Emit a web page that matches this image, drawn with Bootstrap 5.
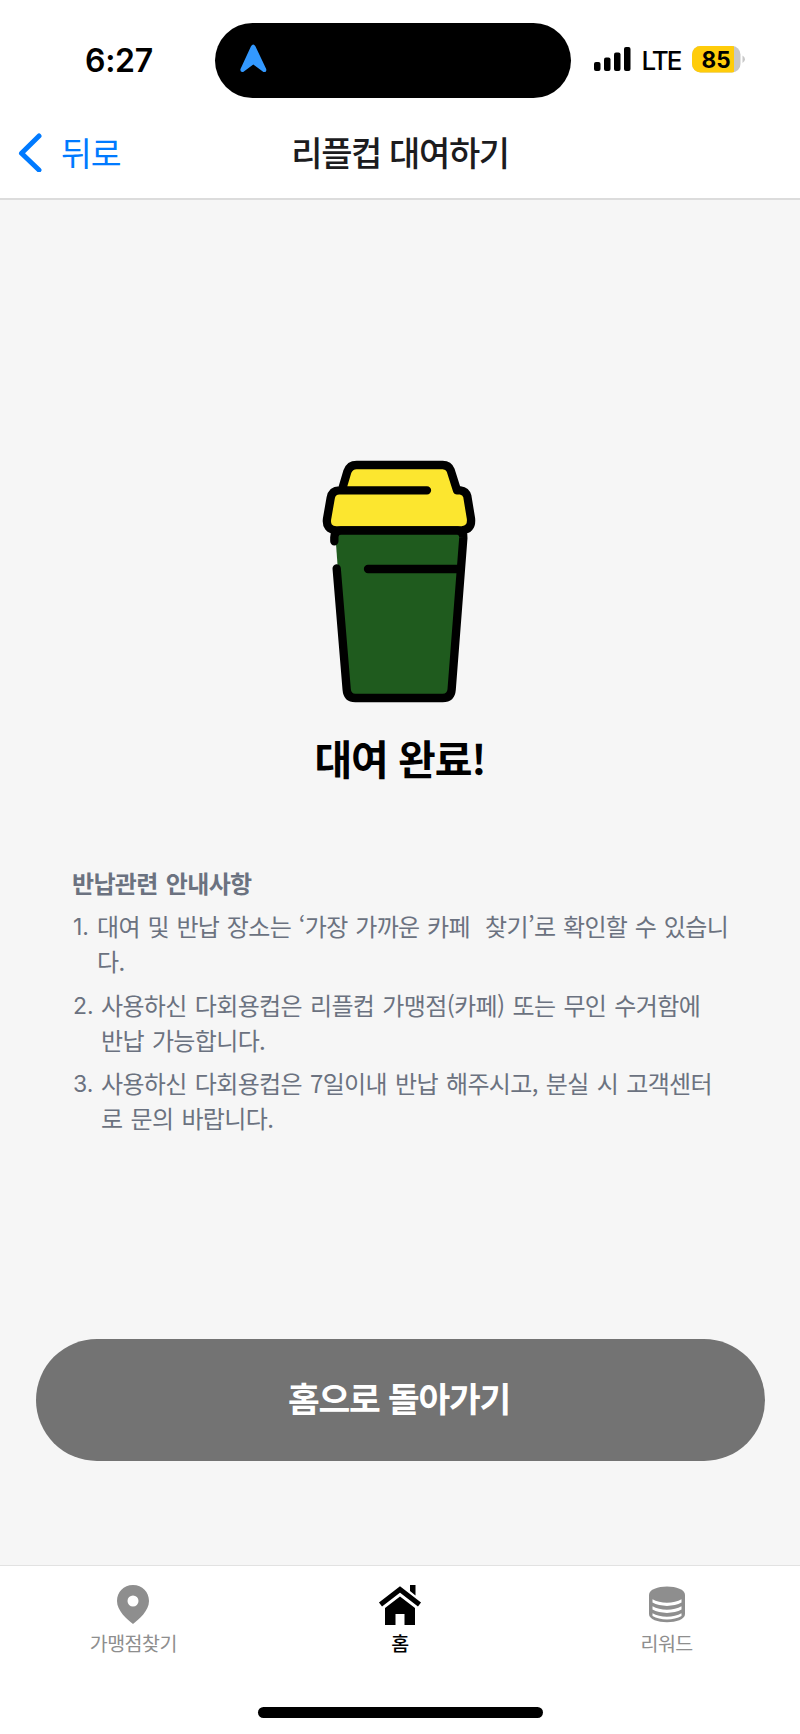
<!DOCTYPE html>
<html lang="ko">
<head>
<meta charset="utf-8">
<meta name="viewport" content="width=device-width, initial-scale=1">
<title>리플컵 대여하기</title>
<link href="https://cdn.jsdelivr.net/npm/bootstrap@5.3.0/dist/css/bootstrap.min.css" rel="stylesheet">
<style>
body{font-family:Inter,"Noto Sans CJK KR",sans-serif;background:#f6f6f6;color:#000;width:800px;height:1734px;overflow:hidden}
svg{display:block;flex:none}
.kr{font-family:"Noto Sans CJK KR",sans-serif}
.top-area{height:200px;border-bottom:2px solid #dcdcdc}
.status-row{height:98px;padding-top:23px}
.clock{width:215px;padding-left:85px;font-size:32px;font-weight:600;line-height:74px;letter-spacing:-.3px}
.island{width:356px;height:75px;background:#000;padding-left:25px}
.lte{font-size:26px;font-weight:500;letter-spacing:-2px;margin-left:11px;width:50px;line-height:75px}
.title-row{height:100px;display:grid;grid-template-columns:1fr auto 1fr;padding:8px 18px 0}
.back{color:#007aff;font-size:33.5px;line-height:44px;letter-spacing:-1px}
.page-title{font-size:34px;font-weight:500;line-height:44px;color:#1c1c1e;letter-spacing:-1.4px}
.cup{margin-top:240px}
.done{font-size:41px;line-height:60px;font-weight:700;margin-top:7px;letter-spacing:-1.1px}
.notes{margin:78px 0 0 72px;color:#6b7280;font-size:24px;line-height:35px;letter-spacing:-.65px;word-spacing:2px}
.notes li{margin-bottom:8.5px;white-space:nowrap}
.notes .num{width:29px;font-family:Inter,sans-serif;font-size:23px;letter-spacing:0;padding-top:2px;padding-left:1px;line-height:35px}
.notes li:first-child .num{width:25px}
.notes li:first-child{word-spacing:1.5px}
.home-btn{--bs-btn-bg:#737373;--bs-btn-color:#fff;--bs-btn-hover-bg:#666;--bs-btn-hover-color:#fff;width:729px;height:122px;font-size:34.5px;letter-spacing:-1.2px;font-weight:700;border:0;margin:0 auto 104px 36px;padding:0 3px 5px 0}
.tabs{height:169px;border-top:1px solid #e2e2e2;padding-top:18px}
.tab{color:#8e8e8e;font-size:19.5px;letter-spacing:-.5px;line-height:28px;text-decoration:none}
.tab svg{height:42px;margin-bottom:3px}
.tab.active{color:#000;font-weight:500}
.home-bar{width:285px;height:11px;background:#000;margin-bottom:16px}
</style>
</head>
<body class="d-flex flex-column">
<header class="top-area bg-white flex-shrink-0">
  <div class="status-row d-flex align-items-center">
    <div class="clock">6:27</div>
    <div class="island rounded-pill d-flex align-items-center">
      <svg width="27" height="29" viewBox="0 0 27 29" style="margin-top:-4px"><path d="M11 2.200Q13.200-1.200 15.400 2.200L26.200 25Q27 28.500 23.400 27.900L13.300 20.500 3.200 27.900Q-.2 28.500.5 25Z" fill="#3399ff"/></svg>
    </div>
    <svg width="37" height="24" viewBox="0 0 37 24" style="margin:-3px 0 0 22.500px"><rect y="15" width="6.500" height="9" rx="2"/><rect x="10" y="10.500" width="6.500" height="13.500" rx="2"/><rect x="20" y="5.500" width="6.500" height="18.500" rx="2"/><rect x="30" width="6.500" height="24" rx="2"/></svg>
    <div class="lte">LTE</div>
    <svg width="54" height="27" viewBox="0 0 54 27" style="margin-top:-3px"><defs><clipPath id="cell"><rect width="48.500" height="26.500" rx="8.500"/></clipPath></defs><g clip-path="url(#cell)"><rect width="49" height="27" fill="#c8c8c8"/><rect width="42" height="27" fill="#ffcc0a"/></g><path d="M50.500 9.500Q53 11 53 13.300T50.500 17Z" fill="#c8c8c8"/><text x="24" y="21.500" text-anchor="middle" font-family="Inter" font-weight="700" font-size="22.500">85</text></svg>
  </div>
  <div class="title-row align-items-center kr">
    <a href="#" class="back d-flex align-items-center text-decoration-none"><svg width="24" height="40" viewBox="0 0 24 40" fill="none" stroke="#007aff" stroke-width="5" stroke-linecap="round" stroke-linejoin="round"><path d="M21 4 3.500 21.200 21 38"/></svg><span style="margin-left:19px">뒤로</span></a>
    <h1 class="page-title m-0">리플컵 대여하기</h1>
    <span></span>
  </div>
</header>
<main class="flex-grow-1 d-flex flex-column kr">
  <svg class="cup align-self-center" width="200" height="280" viewBox="0 0 600 840" fill="none" stroke="#000" stroke-width="25" stroke-linecap="round" stroke-linejoin="round">
    <path d="M105 271H490L455 752Q453 774 430 774H163Q142 774 140 750Z" fill="#1f5b1e" stroke="none"/>
    <path d="M128 142 142 95Q149 75 170 75H428Q446 75 452 91L471 151H481Q498 153 502 169L513 236Q516 268 486 271H108Q77 268 81 237L92 174Q96 151 118 151H126Z" fill="#fce62f" stroke="none"/>
    <path d="M128 142 142 95Q149 75 170 75H428Q446 75 452 91L471 151H481Q498 153 502 169L513 236Q516 268 486 271H108Q77 268 81 237L92 174Q96 151 118 151H381"/>
    <path d="M103 304V292Q103 273 123 271H472Q491 274 490 294L455 748Q453 774 428 774H166Q142 774 140 748L110 385M204 387H480"/>
  </svg>
  <h2 class="done text-center mb-0">대여 완료!</h2>
  <section class="notes">
    <div class="fw-bold">반납관련 안내사항</div>
    <ol class="list-unstyled m-0" style="padding-top:8px">
      <li class="d-flex"><span class="num">1.</span><span>대여 및 반납 장소는 ‘가장 가까운 카페&nbsp; 찾기’로 확인할 수 있습니<br>다.</span></li>
      <li class="d-flex"><span class="num">2.</span><span>사용하신 다회용컵은 리플컵 가맹점(카페) 또는 무인 수거함에<br>반납 가능합니다.</span></li>
      <li class="d-flex"><span class="num">3.</span><span>사용하신 다회용컵은 7일이내 반납 해주시고, 분실 시 고객센터<br>로 문의 바랍니다.</span></li>
    </ol>
  </section>
  <button type="button" class="btn home-btn rounded-pill mt-auto">홈으로 돌아가기</button>
</main>
<footer class="tabs bg-white flex-shrink-0 d-flex flex-column justify-content-between align-items-center kr">
  <nav class="row g-0 w-100">
    <a href="#" class="tab col-4 d-flex flex-column align-items-center"><svg width="34" viewBox="0 0 34 42"><path fill="currentColor" fill-rule="evenodd" d="M17 1C7.500 1 1 8 1 17 1 27 11 35 17 40 23 35 33 27 33 17 33 8 26.500 1 17 1ZM17 11.500A5.500 5.500 0 1 1 17 22.500 5.500 5.500 0 0 1 17 11.500Z"/></svg>가맹점찾기</a>
    <a href="#" class="tab active col-4 d-flex flex-column align-items-center"><svg width="44" viewBox="0 0 44 42"><path d="M2.500 20.500 22 5.500 41.500 20.500" fill="none" stroke="#000" stroke-width="5"/><path d="M32 1H37.500V11.500L32 7ZM22 12.500 37 24V41H26.500V30H17.500V41H7V24Z"/></svg>홈</a>
    <a href="#" class="tab col-4 d-flex flex-column align-items-center"><svg width="36" viewBox="0 0 36 42"><path fill="currentColor" d="M0 11C0 -.500 36 -.500 36 11V30C36 41 0 41 0 30Z"/><path fill="#fff" d="M3.500 15.200C11 19.800 25 19.800 32.500 15.200V18.600C25 23 11 23 3.500 18.600ZM3.500 22.200C11 26.800 25 26.800 32.500 22.200V25.600C25 30 11 30 3.500 25.600ZM3.500 29.200C11 33.800 25 33.800 32.500 29.200V32C25 36.500 11 36.500 3.500 32Z"/></svg>리워드</a>
  </nav>
  <div class="home-bar rounded-pill"></div>
</footer>
<script src="https://cdn.jsdelivr.net/npm/bootstrap@5.3.0/dist/js/bootstrap.bundle.min.js"></script>
</body>
</html>
